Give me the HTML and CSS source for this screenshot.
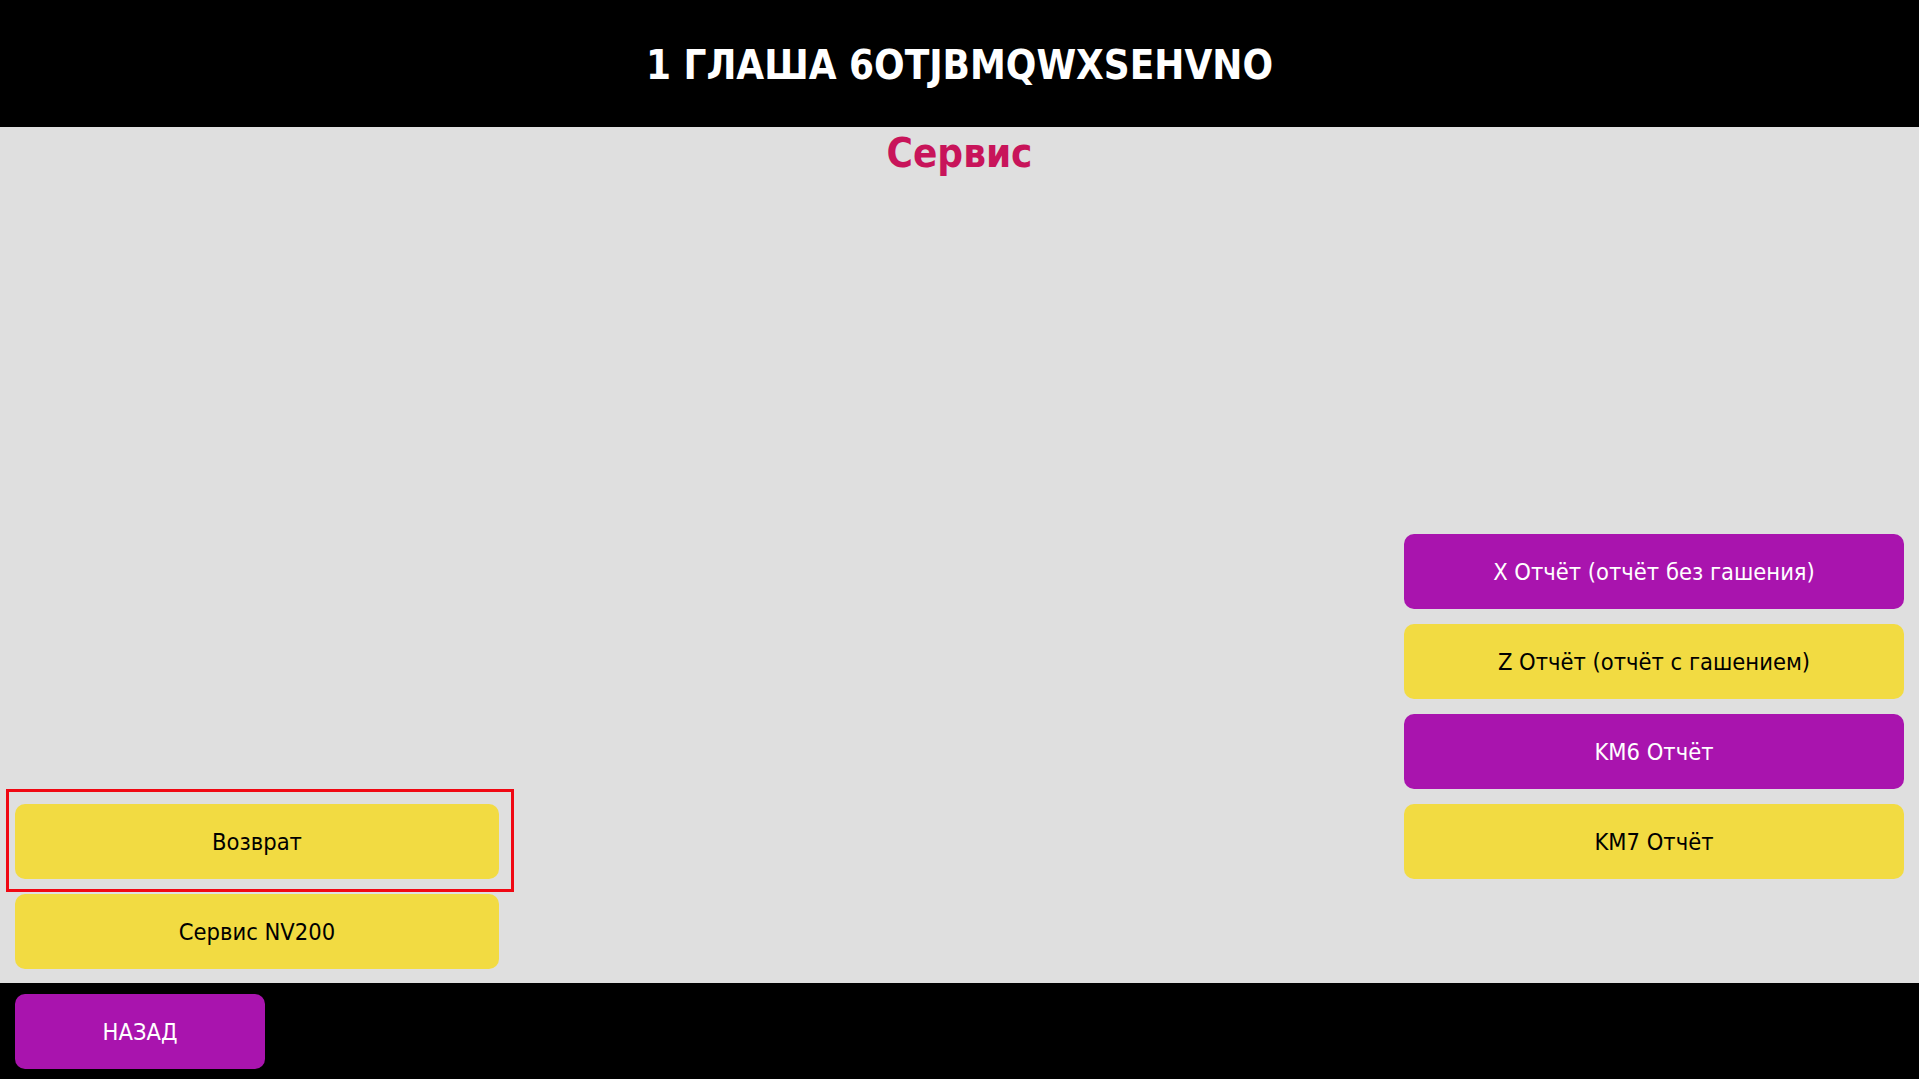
FILE: index.html
```html
<!DOCTYPE html>
<html lang="ru">
<head>
    <meta charset="UTF-8">
    <meta name="viewport" content="width=device-width, initial-scale=1.0">
    <title>Сервис</title>
    <link rel="stylesheet" href="styles.css">
</head>
<body>

    <!-- Шапка с названием кассы -->
    <header class="top-bar">
        <h1>1 ГЛАША 6OTJBMQWXSEHVNO</h1>
    </header>

    <main class="service-screen">
        <h2 class="screen-title">Сервис</h2>

        <div class="button-area">
            <div class="button-column left-column">
                <button class="btn btn-yellow selected">Возврат</button>
                <button class="btn btn-yellow">Сервис NV200</button>
            </div>

            <div class="button-column right-column">
                <button class="btn btn-purple">X Отчёт (отчёт без гашения)</button>
                <button class="btn btn-yellow">Z Отчёт (отчёт с гашением)</button>
                <button class="btn btn-purple">KM6 Отчёт</button>
                <button class="btn btn-yellow">KM7 Отчёт</button>
            </div>
        </div>
    </main>

    <!-- Нижняя панель -->
    <footer class="bottom-bar">
        <button class="btn btn-purple back-button">НАЗАД</button>
    </footer>

</body>
</html>
```

FILE: styles.css
```css
* {
    margin: 0;
    padding: 0;
    box-sizing: border-box;
}

body {
    font-family: "DejaVu Sans Condensed", "DejaVu Sans", sans-serif;
    background-color: #dfdfdf;
    display: flex;
    flex-direction: column;
    height: 100vh;
    color: #000;
}

/* Шапка */
.top-bar {
    background-color: #000;
    height: 127px;
    display: flex;
    justify-content: center;
    align-items: center;
}

.top-bar h1 {
    color: #fff;
    font-size: 40px;
    font-weight: bold;
    padding-top: 2px;
}

.service-screen {
    flex: 1;
    display: flex;
    flex-direction: column;
    justify-content: space-between;
    padding: 0 15px 14px 15px;
}

.screen-title {
    color: #c8145a;
    font-size: 40px;
    font-weight: bold;
    text-align: center;
    padding-top: 3px;
}

.button-area {
    display: flex;
    justify-content: space-between;
    align-items: flex-end;
}

.button-column {
    display: flex;
    flex-direction: column;
    gap: 15px;
}

.left-column {
    width: 484px;
}

.right-column {
    width: 500px;
    margin-bottom: 90px;
}

.btn {
    height: 75px;
    width: 100%;
    border: none;
    border-radius: 10px;
    font-family: inherit;
    font-size: 23.5px;
    cursor: pointer;
    position: relative;
}

.btn-yellow {
    background-color: #f2db42;
    color: #000;
}

.btn-purple {
    background-color: #a914ae;
    color: #fff;
}

/* Рамка выбранной кнопки */
.btn.selected::after {
    content: "";
    position: absolute;
    top: -15px;
    left: -9px;
    right: -15px;
    bottom: -13px;
    border: 3px solid #f00813;
}

/* Нижняя панель */
.bottom-bar {
    background-color: #000;
    height: 96px;
    padding: 11px 15px;
}

.back-button {
    width: 250px;
    height: 75px;
}
```
